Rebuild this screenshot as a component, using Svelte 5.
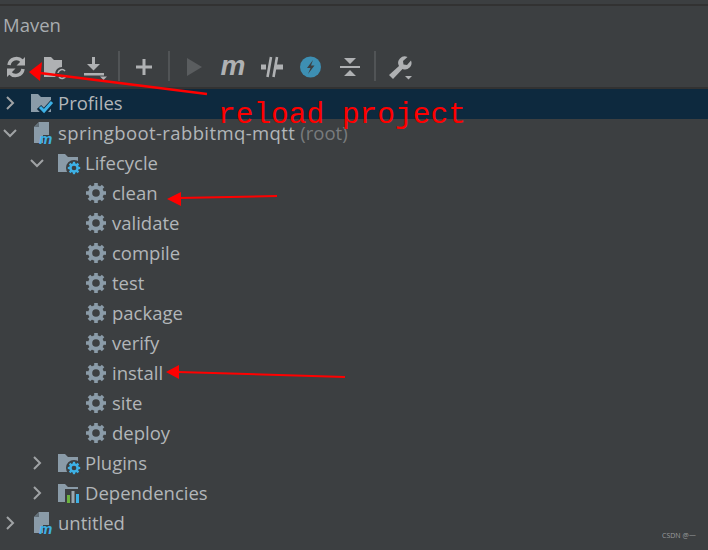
<script>
  const rows = [
    { label: "Profiles", level: 0, arrow: "right", icon: "profiles", selected: true },
    { label: "springboot-rabbitmq-mqtt", note: "(root)", level: 0, arrow: "down", icon: "module" },
    { label: "Lifecycle", level: 1, arrow: "down", icon: "folderGear" },
    { label: "clean", level: 2, icon: "gear" },
    { label: "validate", level: 2, icon: "gear" },
    { label: "compile", level: 2, icon: "gear" },
    { label: "test", level: 2, icon: "gear" },
    { label: "package", level: 2, icon: "gear" },
    { label: "verify", level: 2, icon: "gear" },
    { label: "install", level: 2, icon: "gear" },
    { label: "site", level: 2, icon: "gear" },
    { label: "deploy", level: 2, icon: "gear" },
    { label: "Plugins", level: 1, arrow: "right", icon: "folderGear" },
    { label: "Dependencies", level: 1, arrow: "right", icon: "folderBars" },
    { label: "untitled", level: 0, arrow: "right", icon: "module" }
  ];

  const teeth = [0, 45, 90, 135, 180, 225, 270, 315];
  const folder = "M1 3h7l3 3h10v15H1z";
</script>

{#snippet gear(cx, cy, size, color)}
  <g transform="translate({cx} {cy}) scale({size})">
    {#each teeth as angle}
      <rect x="-1.8" y="-10" width="3.6" height="4" fill={color} transform="rotate({angle})" />
    {/each}
    <circle r="5.8" fill="none" stroke={color} stroke-width="4" />
  </g>
{/snippet}

{#snippet folderBase()}
  <path d={folder} fill="#8a9ba8" />
{/snippet}

{#snippet treeIcon(name)}
  <svg class="tree-icon" viewBox="0 0 24 24" width="24" height="24">
    {#if name === "profiles"}
      {@render folderBase()}
      <path d="M9 16l5 5 9-10" fill="none" stroke="#0d293e" stroke-width="6" />
      <path d="M10 16l4 4 8-9" fill="none" stroke="#3db1e6" stroke-width="3" />
    {:else if name === "module"}
      <path d="M9 1h10v13h-6v8H4V6z" fill="#8a9ba8" />
      <path d="M4.500 6H9V1.500z" fill="#5f6c75" />
      <text x="9" y="22.5" class="module-m">m</text>
    {:else if name === "folderGear"}
      {@render folderBase()}
      <circle cx="17" cy="17" r="8" fill="#3c3f41" />
      {@render gear(17, 17, 0.62, "#3db1e6")}
    {:else if name === "folderBars"}
      {@render folderBase()}
      <rect x="8" y="8" width="16" height="15" fill="#3c3f41" />
      <rect x="10" y="14" width="3" height="8" fill="#6cb33f" />
      <rect x="14.5" y="10" width="3" height="12" fill="#9aa7b0" />
      <rect x="19" y="13" width="3" height="9" fill="#3db1e6" />
    {:else}
      {@render gear(12, 12, 1, "#8a9ba8")}
    {/if}
  </svg>
{/snippet}

<div class="panel">
  <div class="top-line"></div>
  <header>Maven</header>

  <div class="toolbar">
    <div class="tool">
      <svg viewBox="0 0 32 32" width="32" height="32">
        <path d="M9 14a7.500 7.500 0 0 1 13-4M23 18a7.500 7.500 0 0 1-13 4" fill="none" stroke="#afb1b3" stroke-width="3.500" />
        <path d="M25 6v8.500h-8.500zM7 26v-8.500h8.500z" fill="#afb1b3" />
      </svg>
    </div>
    <div class="tool">
      <svg viewBox="0 0 32 32" width="32" height="32">
        <path d="M5 6h7l3 3h8v12h-6v5H5z" fill="#afb1b3" />
        <circle cx="23" cy="23" r="7" fill="#3c3f41" />
        <path d="M19 22a4 4 0 0 1 7-2M27 24a4 4 0 0 1-7 2" fill="none" stroke="#afb1b3" stroke-width="1.600" />
      </svg>
    </div>
    <div class="tool">
      <svg viewBox="0 0 32 32" width="32" height="32">
        <rect x="14" y="6" width="3" height="9" fill="#afb1b3" />
        <path d="M9 13h13l-6.500 6.500z" fill="#afb1b3" />
        <rect x="6" y="22" width="20" height="2.500" fill="#afb1b3" />
        <path d="M22 25.500h7l-3.500 3.500z" fill="#afb1b3" />
      </svg>
    </div>
    <span class="sep"></span>
    <div class="tool">
      <svg viewBox="0 0 32 32" width="32" height="32">
        <path d="M14.500 8h3v6.500H24v3h-6.500V24h-3v-6.500H8v-3h6.500z" fill="#afb1b3" />
      </svg>
    </div>
    <span class="sep"></span>
    <div class="tool">
      <svg viewBox="0 0 32 32" width="32" height="32">
        <path d="M9 7l15 9-15 9z" fill="#5a5d5f" />
      </svg>
    </div>
    <div class="tool">
      <svg viewBox="0 0 32 32" width="32" height="32">
        <text x="16" y="24" class="maven-m">m</text>
      </svg>
    </div>
    <div class="tool">
      <svg viewBox="0 0 32 32" width="32" height="32">
        <path d="M5 13.500h5v5H5zM19 13.500h8v5h-8z" fill="#afb1b3" />
        <path d="M15 6l-3.500 20M21 6l-3.500 20" fill="none" stroke="#afb1b3" stroke-width="2.600" />
      </svg>
    </div>
    <div class="tool">
      <svg viewBox="0 0 32 32" width="32" height="32">
        <circle cx="15.500" cy="16" r="10.500" fill="#3d8fb3" />
        <path d="M18 9l-6 8h3.500l-2.500 6 6.500-8.500h-3.500z" fill="#3c3f41" />
      </svg>
    </div>
    <div class="tool">
      <svg viewBox="0 0 32 32" width="32" height="32">
        <rect x="6" y="15" width="20" height="2" fill="#afb1b3" />
        <path d="M10 7h12l-6 6zM10 25h12l-6-6z" fill="#afb1b3" />
      </svg>
    </div>
    <span class="sep"></span>
    <div class="tool">
      <svg viewBox="0 0 32 32" width="32" height="32">
        <path d="M5 24l10-9a6.500 6.500 0 0 1 8.500-9l-4.500 4 .5 3.500 3.500.5 4-4.500a6.500 6.500 0 0 1-8.500 8.500L9 28z" fill="#afb1b3" />
        <path d="M21 25h7l-3.500 3.500z" fill="#afb1b3" />
      </svg>
    </div>
  </div>

  <div class="tree">
    {#each rows as row}
      <div class="row" class:selected={row.selected} style="padding-left: {row.level * 27}px">
        <span class="chevron">
          {#if row.arrow === "right"}
            <svg viewBox="0 0 20 20" width="20" height="20"><path d="M7 4l6 6-6 6" fill="none" stroke="#a0a3a5" stroke-width="2" /></svg>
          {:else if row.arrow === "down"}
            <svg viewBox="0 0 20 20" width="20" height="20"><path d="M4 7l6 6 6-6" fill="none" stroke="#a0a3a5" stroke-width="2" /></svg>
          {/if}
        </span>
        {@render treeIcon(row.icon)}
        <span class="label" class:long={row.note}>{row.label}</span>
        {#if row.note}<span class="label note">{row.note}</span>{/if}
      </div>
    {/each}
  </div>

  <svg class="marks" viewBox="0 0 708 550" width="708" height="550">
    <path d="M40 73L207 94" stroke="#f00" stroke-width="2.500" fill="none" />
    <path d="M29 72L42 62 40 81z" fill="#f00" />
    <path d="M178 198L277 196" stroke="#f00" stroke-width="2" fill="none" />
    <path d="M167 199L181 192V206z" fill="#f00" />
    <path d="M178 372L345 377" stroke="#f00" stroke-width="2" fill="none" />
    <path d="M166 372L179 365V379z" fill="#f00" />
  </svg>
  <div class="caption">reload project</div>
  <div class="watermark">CSDN @一</div>
</div>

<style>
  :global(body) {
    margin: 0;
    background: #3c3f41;
  }

  .panel {
    position: relative;
    width: 708px;
    height: 550px;
    overflow: hidden;
    background: #3c3f41;
    color: #b2b6b9;
    font-family: "Open Sans", "Noto Sans", sans-serif;
    font-size: 18.500px;
  }

  .top-line {
    height: 2px;
    margin-top: 4px;
    background: #323232;
  }

  header {
    padding-left: 3px;
    height: 39px;
    line-height: 37px;
    color: #a9adb0;
  }

  .toolbar {
    display: flex;
    align-items: center;
    gap: 7px;
    height: 44px;
    padding-top: 2px;
    box-sizing: border-box;
    border-bottom: 2px solid #323232;
  }

  .tool {
    width: 32px;
    height: 32px;
  }

  .sep {
    width: 2px;
    height: 30px;
    margin: -2px 1px 0;
    background: #515456;
  }

  .maven-m {
    font-family: "Liberation Sans", sans-serif;
    font-weight: 700;
    font-style: italic;
    font-size: 28px;
    text-anchor: middle;
    fill: #afb1b3;
  }

  .module-m {
    font-family: "Liberation Sans", sans-serif;
    font-weight: 700;
    font-style: italic;
    font-size: 15px;
    fill: #3db1e6;
  }

  .row {
    display: flex;
    align-items: center;
    height: 30px;
    padding-bottom: 2px;
    box-sizing: border-box;
    white-space: nowrap;
  }

  .row.selected {
    background: #0d293e;
  }

  .chevron {
    flex: 0 0 30px;
    height: 20px;
  }

  .tree-icon {
    flex: none;
    margin-right: 4px;
  }

  .label {
    margin-bottom: 2px;
  }

  .long {
    letter-spacing: 0.400px;
  }

  .note {
    margin-left: 5px;
    color: #787b7d;
  }

  .marks {
    position: absolute;
    top: 0;
    left: 0;
  }

  .caption {
    position: absolute;
    left: 218px;
    top: 97px;
    color: #f00;
    font-family: "Liberation Mono", monospace;
    font-size: 29.500px;
    line-height: 36px;
    white-space: nowrap;
  }

  .watermark {
    position: absolute;
    left: 662px;
    top: 531px;
    color: #9a9c9e;
    font-size: 7px;
    line-height: 10px;
  }
</style>
